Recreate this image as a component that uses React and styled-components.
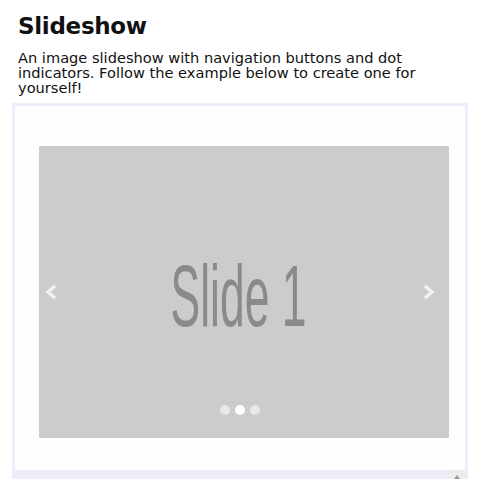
import React, { useState } from "react";
import styled, { createGlobalStyle } from "styled-components";

const GlobalStyle = createGlobalStyle`
  html, body {
    margin: 0;
    padding: 0;
    background: #ffffff;
    overflow: hidden;
  }
  body {
    font-family: "DejaVu Sans", Tahoma, sans-serif;
    color: #111111;
  }
`;

const Page = styled.main`
  width: 480px;
  height: 479px;
  padding: 0 12px;
  box-sizing: border-box;
  display: flex;
  flex-direction: column;
`;

const Title = styled.h1`
  margin: 12px 0 0 6px;
  font-size: 23px;
  line-height: 28px;
  font-weight: bold;
  letter-spacing: -0.3px;
`;

const Intro = styled.p`
  margin: 10px 0 0 6px;
  width: 430px;
  font-size: 14.6px;
  line-height: 15px;
`;

const Frame = styled.section`
  margin-top: 8px;
  flex: 1;
  border: 3px solid #efedf9;
  border-bottom: none;
  background: #fefefe;
  display: flex;
  flex-direction: column;
`;

const Stage = styled.div`
  flex: 1;
  padding: 40px 16px 32px 24px;
`;

const Slide = styled.div`
  position: relative;
  height: 292px;
  background: #cccccc;
  display: flex;
  align-items: center;
  justify-content: center;
  overflow: hidden;
`;

const SlideLabel = styled.span`
  font-family: "Liberation Sans", Arial, sans-serif;
  font-size: 88px;
  line-height: 1;
  color: #8a8a8a;
  transform: translate(-5px, 4px) scaleX(0.505);
  white-space: nowrap;
  filter: blur(0.4px);
`;

const NavButton = styled.button`
  position: absolute;
  top: 50%;
  ${({ side }) => (side === "left" ? "left: 4px;" : "right: 12px;")}
  transform: translateY(-50%);
  width: 16px;
  height: 24px;
  padding: 0;
  border: none;
  background: transparent;
  display: flex;
  align-items: center;
  justify-content: center;
  cursor: pointer;
`;

const Dots = styled.div`
  position: absolute;
  left: 0;
  right: 0;
  bottom: 23px;
  display: flex;
  justify-content: center;
  gap: 5px;
  transform: translateX(-4px);
`;

const Dot = styled.span`
  width: 10px;
  height: 10px;
  border-radius: 50%;
  background: ${({ active }) => (active ? "#ffffff" : "#e8e8e8")};
`;

const ScrollBar = styled.div`
  height: 9px;
  background: #efedf9;
  display: flex;
  justify-content: flex-end;
`;

const ScrollCorner = styled.div`
  width: 17px;
  background: #ececec;
  display: flex;
  justify-content: center;
  align-items: flex-end;
`;

const Chevron = ({ dir }) => (
  <svg width="12" height="16" viewBox="0 0 12 16">
    <path
      d={dir === "left" ? "M10 2 L3 8 L10 14" : "M2 2 L9 8 L2 14"}
      fill="none"
      stroke="#f2f2f2"
      strokeWidth="3.4"
      strokeLinejoin="miter"
    />
  </svg>
);

const App = () => {
  const [current, setCurrent] = useState(1);
  const total = 3;

  return (
    <>
      <GlobalStyle />
      <Page>
        <Title>Slideshow</Title>
        <Intro>
          An image slideshow with navigation buttons and dot indicators. Follow
          the example below to create one for yourself!
        </Intro>
        <Frame>
          <Stage>
            <Slide>
              <SlideLabel>Slide 1</SlideLabel>
              <NavButton
                side="left"
                aria-label="Previous"
                onClick={() => setCurrent((current + total - 1) % total)}
              >
                <Chevron dir="left" />
              </NavButton>
              <NavButton
                side="right"
                aria-label="Next"
                onClick={() => setCurrent((current + 1) % total)}
              >
                <Chevron dir="right" />
              </NavButton>
              <Dots>
                {[0, 1, 2].map((i) => (
                  <Dot key={i} active={i === current} />
                ))}
              </Dots>
            </Slide>
          </Stage>
          <ScrollBar>
            <ScrollCorner>
              <svg width="6" height="4" viewBox="0 0 6 4">
                <path d="M3 0 L6 4 L0 4 Z" fill="#999999" />
              </svg>
            </ScrollCorner>
          </ScrollBar>
        </Frame>
      </Page>
    </>
  );
};

export default App;
